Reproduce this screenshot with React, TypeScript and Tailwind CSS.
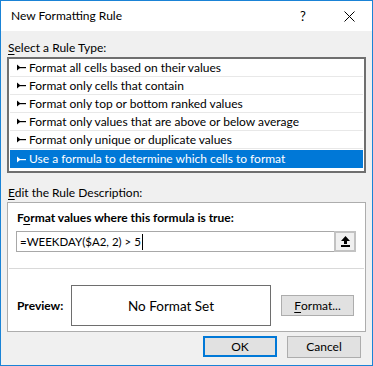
import React from 'react';

const rules = [
  'Format all cells based on their values',
  'Format only cells that contain',
  'Format only top or bottom ranked values',
  'Format only values that are above or below average',
  'Format only unique or duplicate values',
  'Use a formula to determine which cells to format',
];

const font = { fontFamily: "Lato, 'Noto Sans', sans-serif" };

const RuleGlyph = ({ light }: { light: boolean }) => (
  <svg width="9" height="7" viewBox="0 0 9 7" className="shrink-0">
    <path d="M0 0.5 L3.5 3.5 L0 6.5 Z" fill={light ? '#fff' : '#000'} />
    <rect x="2" y="3" width="7" height="1.2" fill={light ? '#fff' : '#000'} />
  </svg>
);

const CollapseIcon = () => (
  <svg width="11" height="11" viewBox="0 0 11 11">
    <path d="M5.5 0 L10 5 L7 5 L7 8 L4 8 L4 5 L1 5 Z" fill="#000" />
    <rect x="1" y="9" width="9" height="2" fill="#000" />
  </svg>
);

export default function App() {
  return (
    <div
      className="w-[373px] h-[366px] border border-[#1a83d6] bg-[#f0f0f0] flex flex-col text-[12px] text-black leading-[16px]"
      style={font}
    >
      {/* title bar */}
      <div className="h-[30px] bg-white flex items-center pl-[10px] pr-[17px] shrink-0">
        <div className="flex-1">New Formatting Rule</div>
        <div className="w-[10px] text-[13px] mr-[34px]">?</div>
        <svg width="11" height="11" viewBox="0 0 11 11">
          <path d="M0.5 0.5 L10.5 10.5 M10.5 0.5 L0.5 10.5" stroke="#000" strokeWidth="1" />
        </svg>
      </div>

      <div className="flex-1 flex flex-col px-[6px] pt-[9px]">
        <div className="h-[16px] pl-[1px]">
          <span className="underline underline-offset-2">S</span>elect a Rule Type:
        </div>

        <div className="mt-[1px] border-2 border-[#6f6f6f] bg-white px-[1px] h-[116px]">
          {rules.map((r, i) => {
            const sel = i === rules.length - 1;
            return (
              <div
                key={r}
                className={`h-[18px] flex items-center gap-[3px] pl-[7px] ${
                  sel ? 'bg-[#0078d7] text-white mt-[1px]' : 'border-b border-[#e8e8e8]'
                }`}
              >
                <RuleGlyph light={sel} />
                <span>{r}</span>
              </div>
            );
          })}
        </div>

        <div className="mt-[12px] h-[16px] pl-[1px]">
          <span className="underline underline-offset-2">E</span>dit the Rule Description:
        </div>

        <div className="mt-[1px] border border-[#adadad] bg-white h-[130px] flex flex-col pt-[7px]">
          <div className="pl-[9px] font-bold h-[16px]">
            F<span className="underline underline-offset-2">o</span>rmat values where this formula is true:
          </div>
          <div className="mt-[5px] ml-[8px] mr-[9px] h-[21px] border border-[#a8a8a8] flex items-center">
            <div className="flex-1 pl-[3px] flex items-center text-[11.5px]">
              =WEEKDAY($A2, 2) &gt; 5
              <span className="inline-block w-[1px] h-[16px] bg-black ml-[1px]" />
            </div>
            <div className="w-[22px] h-[21px] -mr-[1px] border-2 border-[#c2c2c2] bg-[#f0f0f0] flex items-center justify-center">
              <CollapseIcon />
            </div>
          </div>
          <div className="mt-[16px] mx-[1px] h-[1px] bg-[#d9d9d9]" />
          <div className="mt-[16px] flex items-center pl-[9px]">
            <div className="w-[54px] font-bold">Preview:</div>
            <div className="w-[200px] h-[41px] border border-[#6e6e6e] flex items-center justify-center text-[13.5px]">
              No Format Set
            </div>
            <button className="ml-[10px] w-[73px] h-[21px] border border-[#adadad] bg-[#e1e1e1] flex items-center justify-center">
              <span className="underline underline-offset-2">F</span>ormat...
            </button>
          </div>
        </div>

        <div className="mt-[4px] flex justify-end gap-[10px] pr-[5px]">
          <button className="w-[74px] h-[21px] border-2 border-[#0078d7] bg-[#e1e1e1] flex items-center justify-center">
            OK
          </button>
          <button className="w-[74px] h-[22px] border border-[#adadad] bg-[#e1e1e1] flex items-center justify-center">
            Cancel
          </button>
        </div>
      </div>
    </div>
  );
}
